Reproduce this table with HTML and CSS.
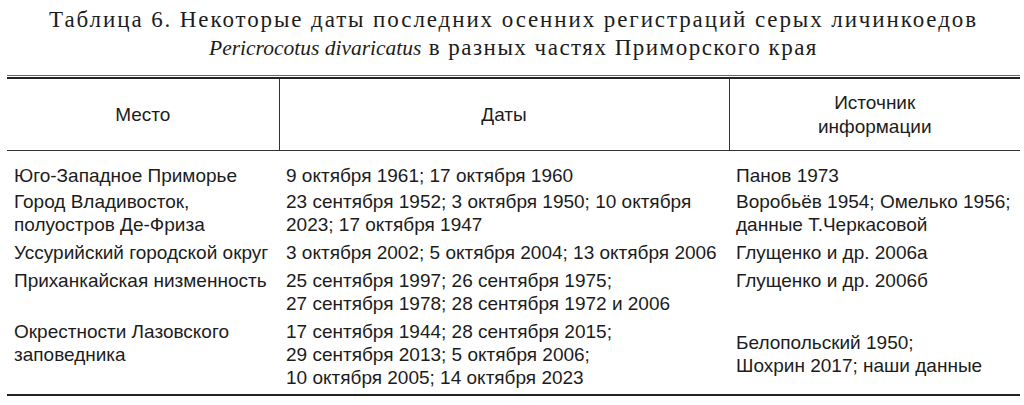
FILE: index.html
```html
<!DOCTYPE html>
<html lang="ru">
<head>
<meta charset="utf-8">
<link rel="stylesheet" href="styles.css">
</head>
<body>
<div class="page">
  <h1 class="caption">Таблица 6. Некоторые даты последних осенних регистраций серых личинкоедов<br><i>Pericrocotus divaricatus</i><span class="tight"> в разных частях Приморского края</span></h1>
  <div class="rule-double"></div>
  <table class="data">
    <colgroup>
      <col class="c1"><col class="c2"><col class="c3">
    </colgroup>
    <thead>
      <tr><th>Место</th><th>Даты</th><th>Источник<br>информации</th></tr>
    </thead>
    <tbody>
      <tr><td>Юго-Западное Приморье</td><td>9 октября 1961; 17 октября 1960</td><td>Панов 1973</td></tr>
      <tr><td>Город Владивосток,<br>полуостров Де-Фриза</td><td>23 сентября 1952; 3 октября 1950; 10 октября<br>2023; 17 октября 1947</td><td>Воробьёв 1954; Омелько 1956;<br>данные Т.Черкасовой</td></tr>
      <tr><td>Уссурийский городской округ</td><td>3 октября 2002; 5 октября 2004; 13 октября 2006</td><td>Глущенко и др. 2006а</td></tr>
      <tr><td>Приханкайская низменность</td><td>25 сентября 1997; 26 сентября 1975;<br>27 сентября 1978; 28 сентября 1972 и 2006</td><td>Глущенко и др. 2006б</td></tr>
      <tr><td>Окрестности Лазовского<br>заповедника</td><td>17 сентября 1944; 28 сентября 2015;<br>29 сентября 2013; 5 октября 2006;<br>10 октября 2005; 14 октября 2023</td><td class="mid">Белопольский 1950;<br>Шохрин 2017; наши данные</td></tr>
    </tbody>
  </table>
</div>
</body>
</html>
```
FILE: styles.css
```css
html, body {
  margin: 0;
  padding: 0;
  background: #fff;
}
.page {
  width: 1013px;
  margin-left: 7px;
  color: #1c1c1c;
}
.caption {
  margin: 0;
  padding-top: 6px;
  height: 75px;
  box-sizing: border-box;
  font-family: "Liberation Serif", "DejaVu Serif", serif;
  font-weight: normal;
  font-size: 23px;
  line-height: 27.5px;
  letter-spacing: 1.9px;
  text-align: center;
  color: #1c1c1c;
}
.caption i {
  font-style: italic;
  font-size: 21.5px;
  letter-spacing: 0;
}
.caption .tight {
  letter-spacing: 1.5px;
}
.rule-double {
  height: 1px;
  border-top: 1px solid #666;
  border-bottom: 2px solid #222;
}
.data {
  width: 100%;
  border-collapse: collapse;
  font-family: "Liberation Sans", Arial, sans-serif;
  font-size: 19px;
  line-height: 23px;
  color: #1c1c1c;
}
.c1 { width: 272px; }
.c2 { width: 450px; }
.c3 { width: 291px; }
.data th {
  font-weight: normal;
  height: 71px;
  padding: 0 7px;
  line-height: 23.5px;
  text-align: center;
  vertical-align: middle;
  border-bottom: 1px solid #333;
}
.data th + th {
  border-left: 1px solid #333;
}
.data td {
  padding: 2.5px 7px;
  text-align: left;
  vertical-align: top;
  white-space: nowrap;
}
.data tbody tr:first-child td {
  padding-top: 12.5px;
  padding-bottom: 0.5px;
}
.data tbody tr:last-child td {
  padding-bottom: 5px;
  border-bottom: 2px solid #222;
}
.data td.mid {
  vertical-align: middle;
}
```
